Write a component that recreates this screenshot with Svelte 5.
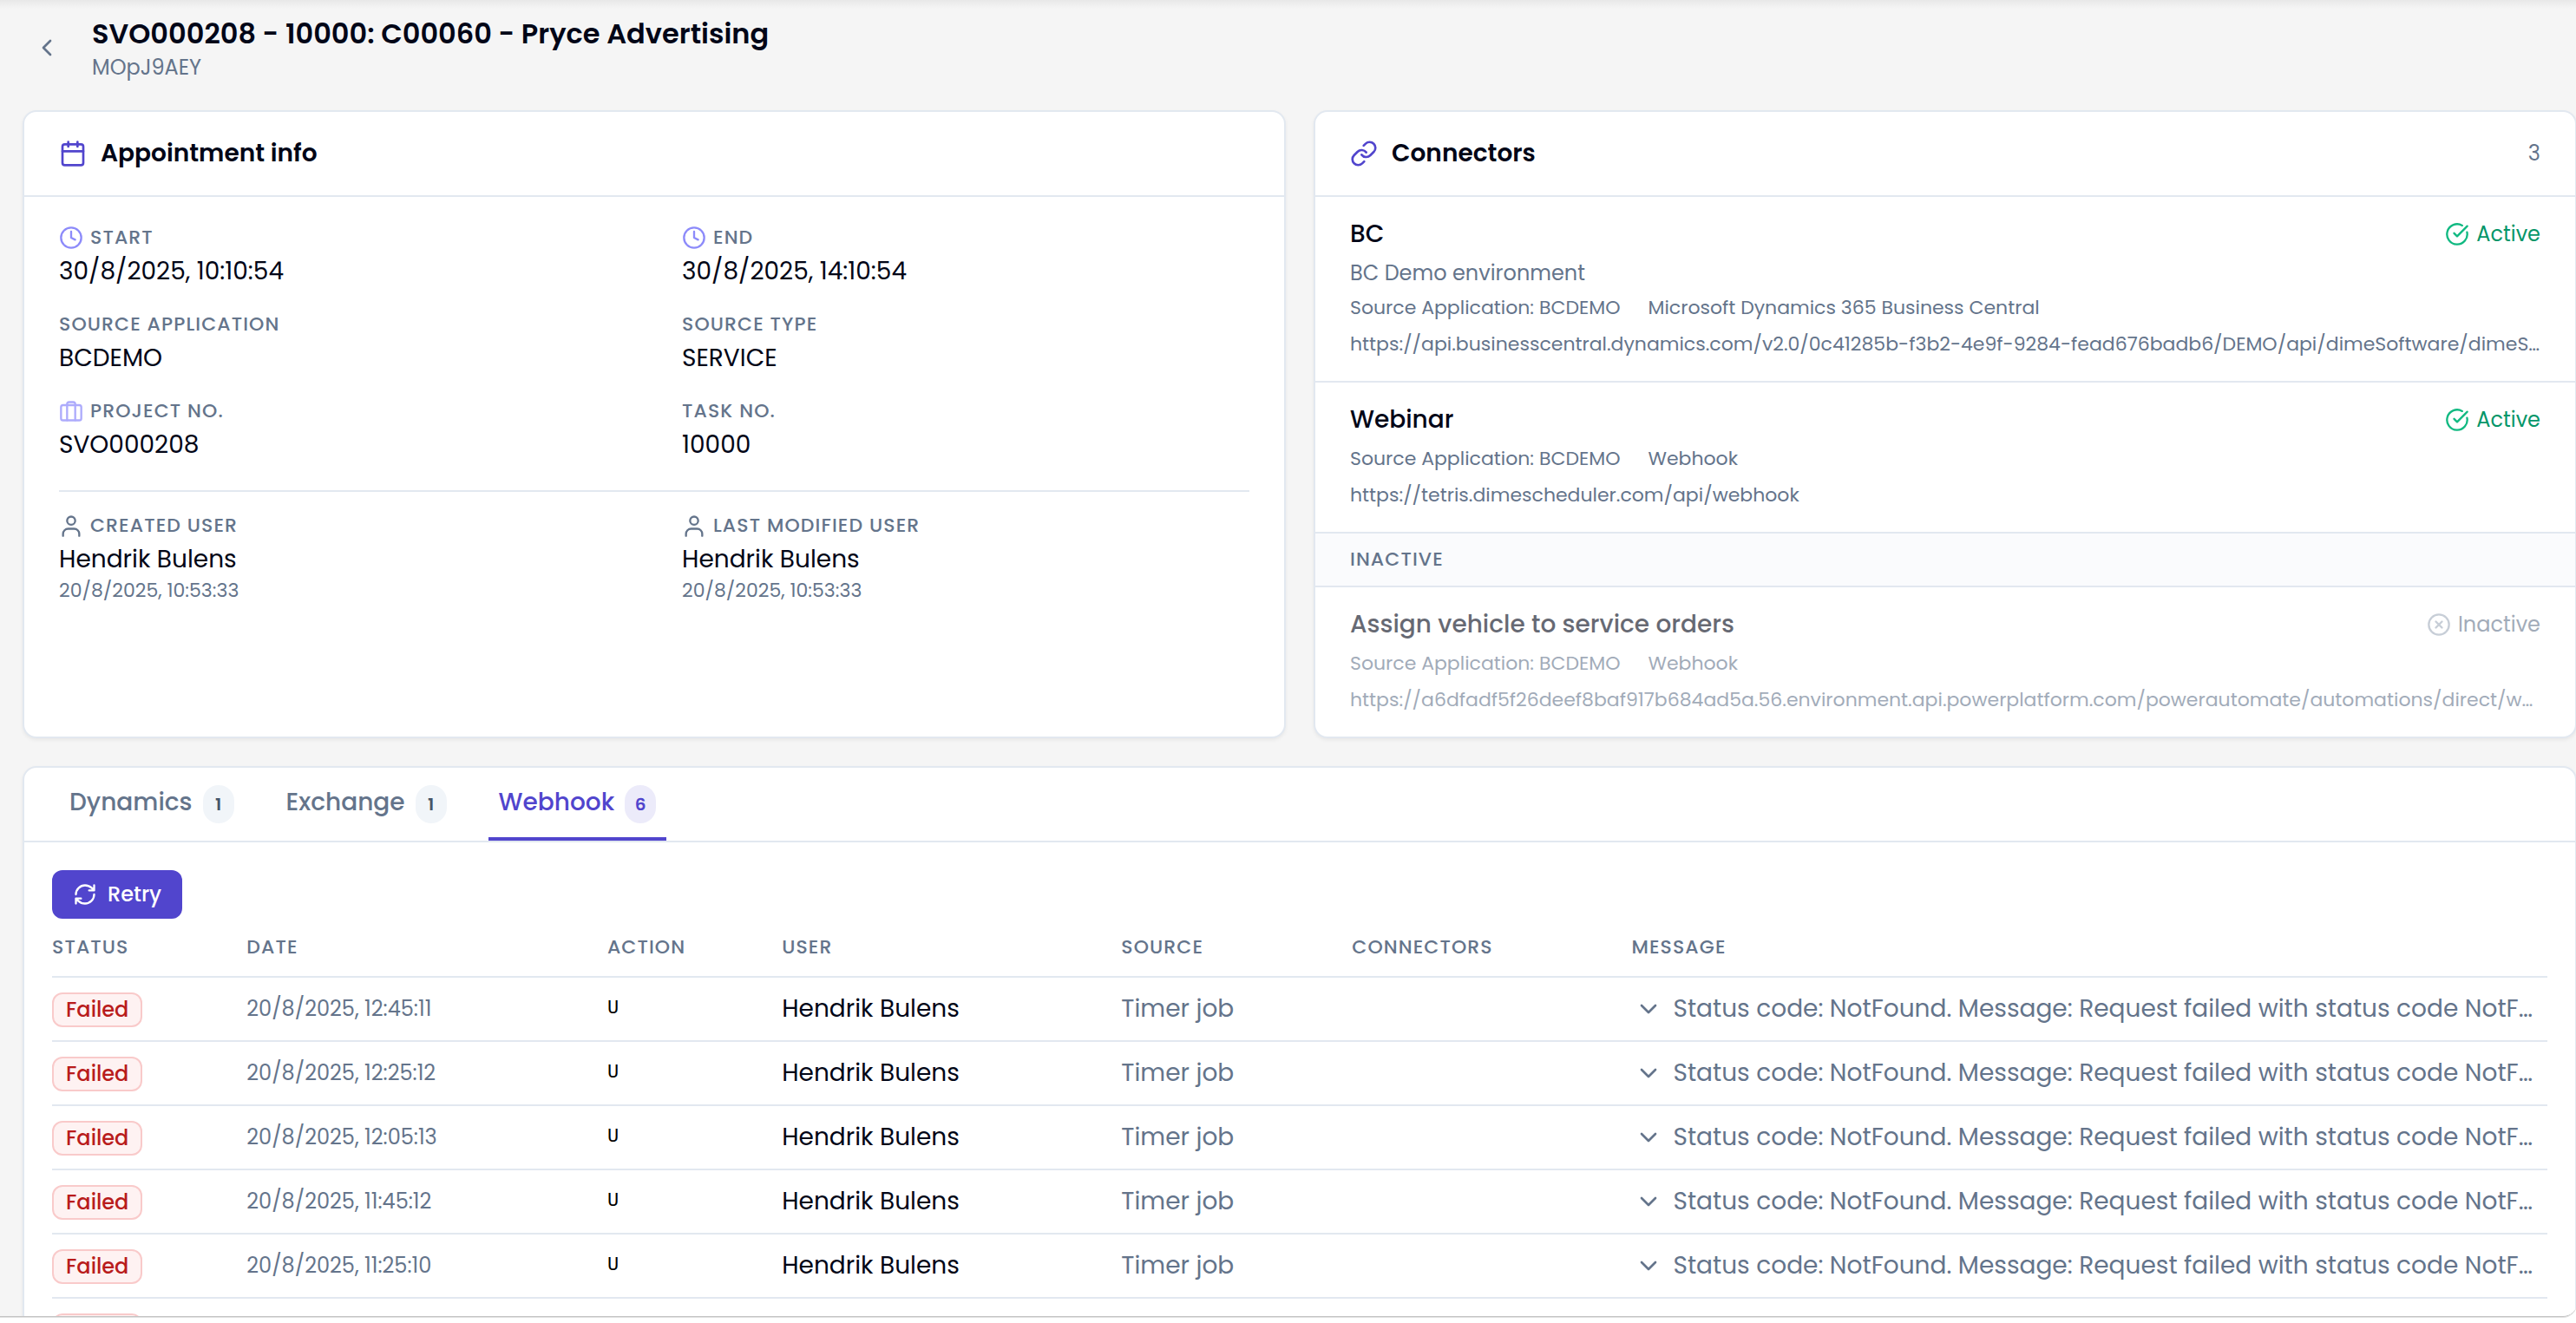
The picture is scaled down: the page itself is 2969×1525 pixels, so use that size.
<script lang="ts">
	type Connector = {
		name: string;
		description?: string;
		type: string;
		url: string;
		active: boolean;
	};

	const activeConnectors: Connector[] = [
		{
			name: 'BC',
			description: 'BC Demo environment',
			type: 'Microsoft Dynamics 365 Business Central',
			url: 'https://api.businesscentral.dynamics.com/v2.0/0c41285b-f3b2-4e9f-9284-fead676badb6/DEMO/api/dimeSoftware/dimeScheduler/v1.0',
			active: true
		},
		{
			name: 'Webinar',
			type: 'Webhook',
			url: 'https://tetris.dimescheduler.com/api/webhook',
			active: true
		}
	];

	const inactiveConnectors: Connector[] = [
		{
			name: 'Assign vehicle to service orders',
			type: 'Webhook',
			url: 'https://a6dfadf5f26deef8baf917b684ad5a.56.environment.api.powerplatform.com/powerautomate/automations/direct/workflows',
			active: false
		}
	];

	const fields = [
		{ label: 'Start', value: '30/8/2025, 10:10:54', icon: 'clock' },
		{ label: 'End', value: '30/8/2025, 14:10:54', icon: 'clock' },
		{ label: 'Source application', value: 'BCDEMO', icon: '' },
		{ label: 'Source type', value: 'SERVICE', icon: '' },
		{ label: 'Project no.', value: 'SVO000208', icon: 'case' },
		{ label: 'Task no.', value: '10000', icon: '' }
	];

	const users = [
		{ label: 'Created user', name: 'Hendrik Bulens', date: '20/8/2025, 10:53:33' },
		{ label: 'Last modified user', name: 'Hendrik Bulens', date: '20/8/2025, 10:53:33' }
	];

	const tabs = [
		{ name: 'Dynamics', count: 1 },
		{ name: 'Exchange', count: 1 },
		{ name: 'Webhook', count: 6 }
	];
	let activeTab = $state('Webhook');

	const columns = ['status', 'date', 'action', 'user', 'source', 'connectors', 'message'];
	const message =
		'Status code: NotFound. Message: Request failed with status code NotFound. Please try again.';
	const dates = [
		'20/8/2025, 12:45:11',
		'20/8/2025, 12:25:12',
		'20/8/2025, 12:05:13',
		'20/8/2025, 11:45:12',
		'20/8/2025, 11:25:10',
		'20/8/2025, 11:05:11'
	];
</script>

{#snippet connector(item: Connector)}
	<article class="connector" class:dimmed={!item.active}>
		<div class="connector-top">
			<h3>{item.name}</h3>
			<span class="state" class:state-active={item.active}>
				{#if item.active}
					<svg class="icon-medium" viewBox="0 0 24 24">
						<path d="M21.8 10A10 10 0 1 1 17 3.34" />
						<path d="m9 11 3 3L22 4" />
					</svg>
					Active
				{:else}
					<svg class="icon-medium" viewBox="0 0 24 24">
						<circle cx="12" cy="12" r="10" />
						<path d="m15 9-6 6M9 9l6 6" />
					</svg>
					Inactive
				{/if}
			</span>
		</div>
		{#if item.description}
			<p class="description">{item.description}</p>
		{/if}
		<p class="meta">
			<span>Source Application: BCDEMO</span>
			<span>{item.type}</span>
		</p>
		<p class="url">{item.url}</p>
	</article>
{/snippet}

<div class="window">
	<main class="page">
		<header class="page-header">
			<button class="back" aria-label="Back">
				<svg class="icon-large" viewBox="0 0 24 24"><path d="m15 18-6-6 6-6" /></svg>
			</button>
			<div class="page-title">
				<h1>SVO000208 - 10000: C00060 - Pryce Advertising</h1>
				<p class="page-id">MOpJ9AEY</p>
			</div>
		</header>

		<div class="cards">
			<section class="card">
				<div class="card-header">
					<svg class="icon-large accent" viewBox="0 0 24 24">
						<rect x="3" y="4" width="18" height="18" rx="2" />
						<path d="M16 2v4M8 2v4M3 10h18" />
					</svg>
					<h2>Appointment info</h2>
				</div>
				<div class="card-body">
					<dl class="fields">
						{#each fields as field}
							<div>
								<dt>
									{#if field.icon === 'clock'}
										<svg class="icon-medium clock" viewBox="0 0 24 24">
											<circle cx="12" cy="12" r="10" />
											<path d="M12 6v6l4 2" />
										</svg>
									{:else if field.icon === 'case'}
										<svg class="icon-medium case" viewBox="0 0 24 24">
											<rect x="2" y="6" width="20" height="15" rx="2" />
											<path d="M16 21V5a2 2 0 0 0-2-2h-4a2 2 0 0 0-2 2v16" />
										</svg>
									{/if}
									{field.label}
								</dt>
								<dd>{field.value}</dd>
							</div>
						{/each}
					</dl>
					<dl class="fields users">
						{#each users as user}
							<div>
								<dt>
									<svg class="icon-medium" viewBox="0 0 24 24">
										<path d="M20 22v-2a5 5 0 0 0-5-5H9a5 5 0 0 0-5 5v2" />
										<circle cx="12" cy="7" r="4" />
									</svg>
									{user.label}
								</dt>
								<dd>{user.name}</dd>
								<dd class="user-date">{user.date}</dd>
							</div>
						{/each}
					</dl>
				</div>
			</section>

			<section class="card">
				<div class="card-header">
					<svg class="icon-large accent" viewBox="0 0 24 24">
						<path d="M10 13a5 5 0 0 0 7.54.54l3-3a5 5 0 0 0-7.07-7.07l-1.72 1.71" />
						<path d="M14 11a5 5 0 0 0-7.54-.54l-3 3a5 5 0 0 0 7.07 7.07l1.71-1.71" />
					</svg>
					<h2>Connectors</h2>
					<span class="total">3</span>
				</div>
				{#each activeConnectors as item}
					{@render connector(item)}
				{/each}
				<h4 class="group">Inactive</h4>
				{#each inactiveConnectors as item}
					{@render connector(item)}
				{/each}
			</section>
		</div>

		<section class="card log">
			<div class="tabs" role="tablist">
				{#each tabs as tab}
					<button
						class="tab"
						class:selected={activeTab === tab.name}
						role="tab"
						aria-selected={activeTab === tab.name}
						onclick={() => (activeTab = tab.name)}
					>
						{tab.name}
						<span class="count">{tab.count}</span>
					</button>
				{/each}
			</div>
			<div class="log-body">
				<button class="retry">
					<svg class="icon-medium" viewBox="0 0 24 24">
						<path d="M3 12a9 9 0 0 1 9-9 9.75 9.75 0 0 1 6.74 2.74L21 8M21 3v5h-5" />
						<path d="M21 12a9 9 0 0 1-9 9 9.75 9.75 0 0 1-6.74-2.74L3 16M8 16H3v5" />
					</svg>
					Retry
				</button>
				<table>
					<thead>
						<tr>
							{#each columns as column}
								<th class="col-{column}">{column}</th>
							{/each}
						</tr>
					</thead>
					<tbody>
						{#each dates as date}
							<tr>
								<td><span class="badge">Failed</span></td>
								<td class="date">{date}</td>
								<td class="action">U</td>
								<td>Hendrik Bulens</td>
								<td class="muted">Timer job</td>
								<td></td>
								<td class="muted">
									<div class="message">
										<button class="expand" aria-label="Expand message">
											<svg class="icon-large" viewBox="0 0 24 24"><path d="m6 9 6 6 6-6" /></svg>
										</button>
										<span class="message-text">{message}</span>
									</div>
								</td>
							</tr>
						{/each}
					</tbody>
				</table>
			</div>
		</section>
	</main>
</div>

<style>
	:global(body) {
		margin: 0;
		overflow: hidden;
		background: #fff;
	}
	.window {
		box-sizing: border-box;
		height: 100vh;
		padding-bottom: 7px;
		overflow: hidden;
		color: #020617;
		font-family: Poppins, Inter, sans-serif;
		font-size: 28px;
		line-height: 40px;
	}
	.page {
		box-sizing: border-box;
		height: 100%;
		padding: 16px 0 0 26px;
		margin-right: -1px;
		overflow: hidden;
		background: linear-gradient(#e8e8e8, #f5f5f5 10px);
		border-bottom: 1px solid #c4c4c4;
		border-bottom-right-radius: 16px;
		box-shadow: 0 1px 0 #e0e0e0;
	}
	h1,
	h2,
	h3,
	h4,
	p,
	dl,
	dd {
		margin: 0;
	}
	button {
		padding: 0;
		border: none;
		background: none;
		color: inherit;
		font: inherit;
		cursor: pointer;
	}
	svg {
		flex: none;
		fill: none;
		stroke: currentColor;
		stroke-width: 2;
		stroke-linecap: round;
		stroke-linejoin: round;
	}
	.icon-large {
		width: 32px;
		height: 32px;
	}
	.icon-medium {
		width: 28px;
		height: 28px;
	}
	.accent {
		color: #5145cd;
	}
	.page-header {
		display: flex;
		align-items: center;
		gap: 36px;
		height: 78px;
		margin-bottom: 33px;
	}
	.back {
		display: flex;
		padding-left: 12px;
		color: #64748b;
	}
	.page-title {
		padding-top: 2px;
	}
	h1 {
		font-size: 32px;
		font-weight: 600;
		line-height: 44px;
	}
	.page-id {
		color: #64748b;
		font-size: 24px;
		line-height: 34px;
	}
	.cards {
		display: grid;
		grid-template-columns: 1fr 1fr;
		gap: 32px;
		margin-bottom: 32px;
	}
	.card {
		min-width: 0;
		border: 2px solid #e2e8f0;
		border-radius: 16px;
		background: #fff;
		box-shadow: 0 2px 4px rgba(0, 0, 0, 0.06);
	}
	.card-header {
		display: flex;
		align-items: center;
		gap: 16px;
		height: 96px;
		padding: 0 40px;
		border-bottom: 2px solid #e2e8f0;
	}
	h2 {
		font-size: 28px;
		font-weight: 600;
	}
	.total {
		margin-left: auto;
		color: #64748b;
		font-size: 24px;
	}
	.card-body {
		padding: 28px 40px;
	}
	.fields {
		display: grid;
		grid-template-columns: 1fr 1fr;
		gap: 22px 64px;
	}
	.users {
		margin-top: 32px;
		padding-top: 20px;
		border-top: 2px solid #e2e8f0;
	}
	dt,
	th,
	.group {
		color: #64748b;
		font-size: 22px;
		font-weight: 500;
		letter-spacing: 0.05em;
		text-transform: uppercase;
	}
	dt {
		display: flex;
		align-items: center;
		gap: 8px;
		line-height: 38px;
	}
	.clock {
		color: #8d8bfa;
	}
	.case {
		color: #adabfc;
	}
	.user-date {
		color: #64748b;
		font-size: 22px;
		line-height: 32px;
	}
	.connector {
		padding: 22px 40px;
		border-bottom: 2px solid #e2e8f0;
	}
	.connector:last-child {
		border-bottom: none;
	}
	.connector > *,
	.state {
		color: #64748b;
	}
	.dimmed > * {
		opacity: 0.6;
	}
	.connector-top {
		display: flex;
		justify-content: space-between;
		margin-bottom: 4px;
		line-height: 42px;
	}
	h3 {
		color: #020617;
		font-size: 28px;
		font-weight: 500;
	}
	.state {
		display: flex;
		align-items: center;
		gap: 8px;
		font-size: 24px;
	}
	.state svg {
		color: #a3aebd;
	}
	.state-active {
		color: #059669;
	}
	.state-active svg {
		color: #10b981;
	}
	.description {
		font-size: 24px;
	}
	.meta {
		display: flex;
		gap: 32px;
		font-size: 22px;
	}
	.url {
		margin-top: 2px;
		overflow: hidden;
		font-size: 22px;
		text-overflow: ellipsis;
		white-space: nowrap;
	}
	.group {
		padding: 10px 40px;
		border-bottom: 2px solid #e2e8f0;
		background: #fafbfd;
	}
	.tabs {
		display: flex;
		gap: 36px;
		height: 84px;
		padding: 0 40px;
		border-bottom: 2px solid #e2e8f0;
	}
	.tab {
		display: flex;
		align-items: center;
		gap: 12px;
		padding: 0 12px;
		border-bottom: 4px solid transparent;
		color: #64748b;
		font-weight: 500;
	}
	.count {
		min-width: 36px;
		margin-top: 4px;
		border-radius: 18px;
		background: #f1f5f9;
		color: #475569;
		font-size: 20px;
		font-weight: 600;
		line-height: 44px;
		text-align: center;
	}
	.selected {
		border-color: #5145cd;
		border-radius: 4px 4px 0 0;
		color: #5145cd;
	}
	.selected .count {
		background: #ecebfa;
		color: #5145cd;
	}
	.log-body {
		padding: 32px;
	}
	.retry {
		display: flex;
		align-items: center;
		gap: 12px;
		height: 56px;
		padding: 0 24px;
		border-radius: 12px;
		background: #5145cd;
		color: #fff;
		font-size: 24px;
		font-weight: 500;
	}
	table {
		width: 100%;
		border-spacing: 0;
		table-layout: fixed;
	}
	th,
	td {
		box-sizing: border-box;
		padding: 0;
		border-bottom: 2px solid #e2e8f0;
		text-align: left;
		white-space: nowrap;
	}
	th {
		height: 68px;
	}
	td {
		height: 74px;
	}
	.col-status {
		width: 7.8%;
	}
	.col-date {
		width: 14.45%;
	}
	.col-action {
		width: 7%;
	}
	.col-user {
		width: 13.6%;
	}
	.col-source {
		width: 9.25%;
	}
	.col-connectors {
		width: 11.2%;
	}
	.badge {
		display: inline-block;
		padding: 0 14px;
		border: 2px solid #f9caca;
		border-radius: 12px;
		background: #fef2f2;
		color: #b91c1c;
		font-size: 24px;
		font-weight: 500;
		line-height: 36px;
		vertical-align: middle;
	}
	.date {
		color: #64748b;
		font-size: 24px;
	}
	.action {
		color: #000;
		font-family: 'Liberation Mono', monospace;
		font-size: 22px;
	}
	.muted {
		color: #64748b;
	}
	.message {
		display: flex;
		align-items: center;
		gap: 12px;
		padding: 0 16px 0 4px;
	}
	.expand {
		display: flex;
	}
	.message-text {
		overflow: hidden;
		text-overflow: ellipsis;
	}
</style>
